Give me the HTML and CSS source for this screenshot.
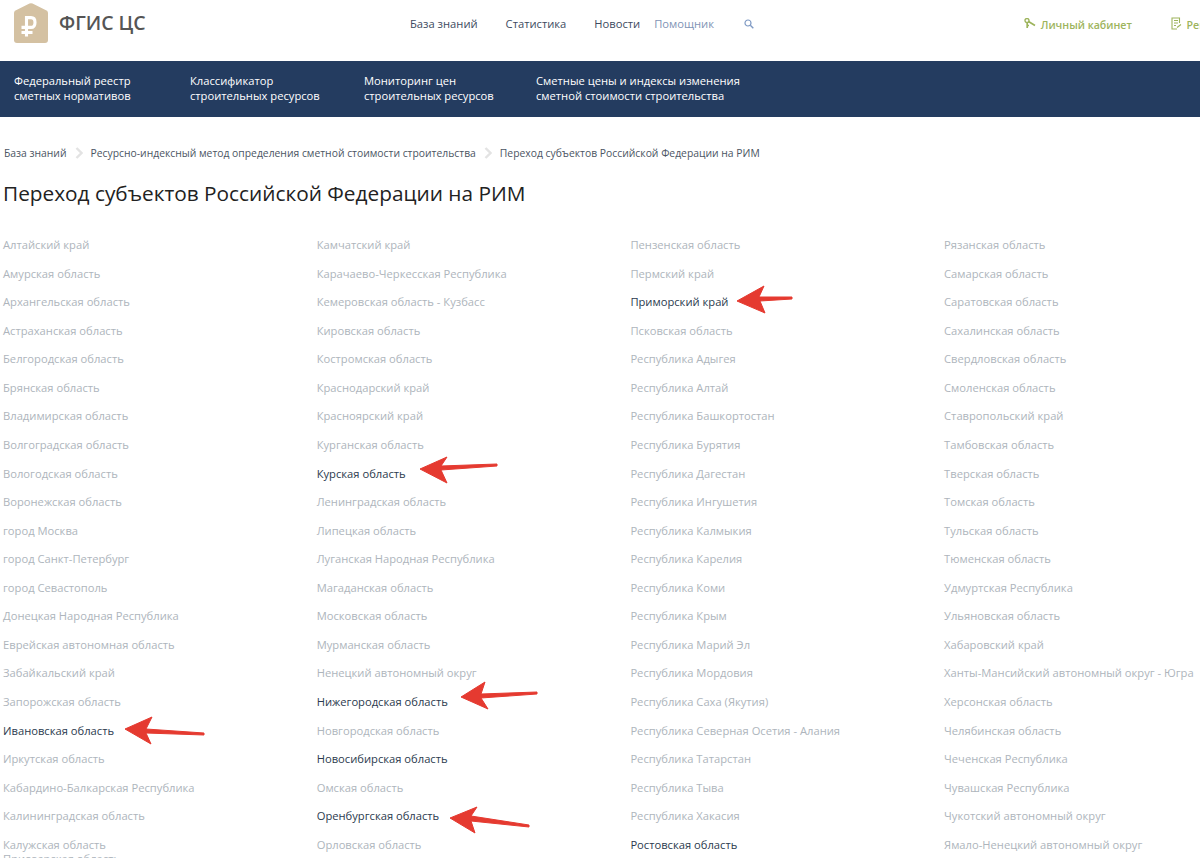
FILE: index.html
```html
<!DOCTYPE html>
<html lang="ru">
<head>
    <meta charset="UTF-8">
    <title>Переход субъектов Российской Федерации на РИМ</title>
    <link rel="stylesheet" href="styles.css">
</head>
<body>
    <header class="top-bar">
        <a class="logo">
            <svg class="logo-icon" width="34" height="40" viewBox="0 0 34 40">
                <path d="M0 10 Q0 8.5 1.5 7.6 L15.5 0.5 Q17 0 18.5 0.5 L32.5 7.6 Q34 8.5 34 10 V37 Q34 40 31 40 H3 Q0 40 0 37 Z" fill="#d4c1a2"/>
                <path d="M12.5 33.5 V14.6 H17 Q21 14.6 21 19.4 Q21 24.4 17 24.4 H7.5 M7.5 29.5 H18.5" fill="none" stroke="#fff" stroke-width="3.1"/>
            </svg>
            <span class="logo-text">ФГИС ЦС</span>
        </a>
        <nav class="top-nav">
            <a class="nav-base">База знаний</a>
            <a class="nav-stat">Статистика</a>
            <a class="nav-news">Новости</a>
            <a class="nav-help">Помощник</a>
            <svg class="search-icon" width="10" height="10" viewBox="0 0 10 10">
                <circle cx="4" cy="4" r="3" fill="none" stroke="#7f9ac4" stroke-width="1.2"/>
                <path d="M6.3 6.3 L9.3 9.3" stroke="#7f9ac4" stroke-width="1.4"/>
            </svg>
        </nav>
        <div class="user-links">
            <a class="user-link user-cabinet">
                <svg width="12" height="12" viewBox="0 0 12 12">
                    <circle cx="3" cy="2.5" r="2" fill="none" stroke="#9db45c" stroke-width="1.4"/>
                    <path d="M3.2 4.5 V10 M3.2 7.5 H5 M4.5 3.5 L11 7.5" fill="none" stroke="#9db45c" stroke-width="1.7"/>
                </svg>
                Личный кабинет
            </a>
            <a class="user-link user-reg">
                <svg width="11" height="13" viewBox="0 0 11 13">
                    <path d="M8.5 6 V1 H1 V12 H6 M3 3.5 H7 M3 6 H7 M3 8.5 H5 M6 10.5 L10 7.5" fill="none" stroke="#9db45c" stroke-width="1.1"/>
                </svg>
                Регистрация
            </a>
        </div>
    </header>

    <nav class="main-nav">
        <a class="main-item item-1">Федеральный реестр<br>сметных нормативов</a>
        <a class="main-item item-2">Классификатор<br>строительных ресурсов</a>
        <a class="main-item item-3">Мониторинг цен<br>строительных ресурсов</a>
        <a class="main-item">Сметные цены и индексы изменения<br>сметной стоимости строительства</a>
    </nav>

    <div class="crumbs">
        <a>База знаний</a>
        <svg class="crumb-sep" width="8" height="12" viewBox="0 0 8 12"><path d="M1.5 1 L6.5 6 L1.5 11" fill="none" stroke="#e3e3e3" stroke-width="2.4"/></svg>
        <a>Ресурсно-индексный метод определения сметной стоимости строительства</a>
        <svg class="crumb-sep" width="8" height="12" viewBox="0 0 8 12"><path d="M1.5 1 L6.5 6 L1.5 11" fill="none" stroke="#e3e3e3" stroke-width="2.4"/></svg>
        <a>Переход субъектов Российской Федерации на РИМ</a>
    </div>

    <h1 class="page-title">Переход субъектов Российской Федерации на РИМ</h1>

    <main class="regions">
        <ul class="region-col">
            <li>Алтайский край</li>
            <li>Амурская область</li>
            <li>Архангельская область</li>
            <li>Астраханская область</li>
            <li>Белгородская область</li>
            <li>Брянская область</li>
            <li>Владимирская область</li>
            <li>Волгоградская область</li>
            <li>Вологодская область</li>
            <li>Воронежская область</li>
            <li>город Москва</li>
            <li>город Санкт-Петербург</li>
            <li>город Севастополь</li>
            <li>Донецкая Народная Республика</li>
            <li>Еврейская автономная область</li>
            <li>Забайкальский край</li>
            <li>Запорожская область</li>
            <li class="active">Ивановская область</li>
            <li>Иркутская область</li>
            <li>Кабардино-Балкарская Республика</li>
            <li>Калининградская область</li>
            <li class="cut">Калужская область</li>
            <li>Приозерская область</li>
        </ul>
        <ul class="region-col">
            <li>Камчатский край</li>
            <li>Карачаево-Черкесская Республика</li>
            <li>Кемеровская область - Кузбасс</li>
            <li>Кировская область</li>
            <li>Костромская область</li>
            <li>Краснодарский край</li>
            <li>Красноярский край</li>
            <li>Курганская область</li>
            <li class="active">Курская область</li>
            <li>Ленинградская область</li>
            <li>Липецкая область</li>
            <li>Луганская Народная Республика</li>
            <li>Магаданская область</li>
            <li>Московская область</li>
            <li>Мурманская область</li>
            <li>Ненецкий автономный округ</li>
            <li class="active">Нижегородская область</li>
            <li>Новгородская область</li>
            <li class="active">Новосибирская область</li>
            <li>Омская область</li>
            <li class="active">Оренбургская область</li>
            <li>Орловская область</li>
        </ul>
        <ul class="region-col">
            <li>Пензенская область</li>
            <li>Пермский край</li>
            <li class="active">Приморский край</li>
            <li>Псковская область</li>
            <li>Республика Адыгея</li>
            <li>Республика Алтай</li>
            <li>Республика Башкортостан</li>
            <li>Республика Бурятия</li>
            <li>Республика Дагестан</li>
            <li>Республика Ингушетия</li>
            <li>Республика Калмыкия</li>
            <li>Республика Карелия</li>
            <li>Республика Коми</li>
            <li>Республика Крым</li>
            <li>Республика Марий Эл</li>
            <li>Республика Мордовия</li>
            <li>Республика Саха (Якутия)</li>
            <li>Республика Северная Осетия - Алания</li>
            <li>Республика Татарстан</li>
            <li>Республика Тыва</li>
            <li>Республика Хакасия</li>
            <li class="active">Ростовская область</li>
        </ul>
        <ul class="region-col">
            <li>Рязанская область</li>
            <li>Самарская область</li>
            <li>Саратовская область</li>
            <li>Сахалинская область</li>
            <li>Свердловская область</li>
            <li>Смоленская область</li>
            <li>Ставропольский край</li>
            <li>Тамбовская область</li>
            <li>Тверская область</li>
            <li>Томская область</li>
            <li>Тульская область</li>
            <li>Тюменская область</li>
            <li>Удмуртская Республика</li>
            <li>Ульяновская область</li>
            <li>Хабаровский край</li>
            <li>Ханты-Мансийский автономный округ - Югра</li>
            <li>Херсонская область</li>
            <li>Челябинская область</li>
            <li>Чеченская Республика</li>
            <li>Чувашская Республика</li>
            <li>Чукотский автономный округ</li>
            <li>Ямало-Ненецкий автономный округ</li>
        </ul>
    </main>

    <!-- red arrows drawn over the list -->
    <svg class="arrows" width="1200" height="858" viewBox="0 0 1200 858">
        <g fill="#e53a30" stroke="#e53a30">
            <path d="M125 729 L152 717 L146 729 L204 733 L204 735 L146 733 L151 744 Z"/>
            <path d="M737 301 L764 286 L759 297 L792 297 L792 299 L760 301 L765 313 Z"/>
            <path d="M420 469 L447 457 L441 466 L497 464 L497 466 L441 470 L447 483 Z"/>
            <path d="M461 697 L485 682 L481 694 L537 692 L537 694 L481 698 L488 709 Z"/>
            <path d="M450 818 L477 807 L471 816 L529 825 L529 827 L471 821 L475 833 Z"/>
        </g>
    </svg>
</body>
</html>
```

FILE: styles.css
```css
html, body {
    height: 858px;
    overflow: hidden;
}

body {
    margin: 0;
    font-family: 'Open Sans', sans-serif;
    background-color: #fff;
    color: #333;
    position: relative;
}

.top-bar {
    display: flex;
    height: 61px;
    white-space: nowrap;
    overflow: hidden;
}

.logo {
    display: flex;
    flex: none;
    align-items: flex-start;
    padding: 3px 0 0 14px;
    width: 396px;
    box-sizing: border-box;
}

.logo-text {
    font-size: 19.5px;
    font-weight: 600;
    color: #555;
    margin: 6px 0 0 11px;
}

.top-nav {
    display: flex;
    flex: none;
    align-items: center;
    height: 47px;
    width: 620px;
    font-size: 11.2px;
    color: #3c4a60;
    box-sizing: border-box;
    padding-left: 14px;
}

.nav-base { margin-right: 28px; }
.nav-stat { margin-right: 28px; }
.nav-news { margin-right: 14px; }
.nav-help { margin-right: 30px; color: #7f94b5; }

.user-links {
    display: flex;
    flex: none;
    align-items: center;
    height: 49px;
    font-size: 10.6px;
    font-weight: 600;
    color: #9db45c;
    padding-left: 8px;
}

.user-link svg { margin-right: 2px; vertical-align: -1px; }
.user-cabinet { margin-right: 39px; }

.main-nav {
    display: flex;
    height: 56px;
    box-sizing: border-box;
    padding: 12px 0 0 14px;
    background-color: #243c60;
    color: #fff;
    font-size: 11.2px;
    line-height: 15px;
}

.item-1 { width: 176px; }
.item-2 { width: 174px; }
.item-3 { width: 172px; }

.crumbs {
    display: flex;
    align-items: center;
    margin: 29px 0 0 4px;
    font-size: 10.35px;
    line-height: 14px;
    color: #4b5563;
}

.crumb-sep { margin: 0 8px; }

.page-title {
    font-size: 20.8px;
    font-weight: 400;
    line-height: 28px;
    color: #222;
    margin: 19px 0 0 3px;
}

.regions {
    display: grid;
    grid-template-columns: repeat(4, 313.7px);
    margin: 30px 0 0 3px;
}

.region-col {
    list-style: none;
    margin: 0;
    padding: 0;
    font-size: 11.2px;
    line-height: 16px;
    color: #aeb5bc;
    white-space: nowrap;
}

.region-col li { margin-bottom: 12.57px; }
.region-col li.cut { margin-bottom: -1.5px; }
.region-col li.active { color: #2b3a4e; }

.arrows {
    position: absolute;
    left: 0;
    top: 0;
}
```
